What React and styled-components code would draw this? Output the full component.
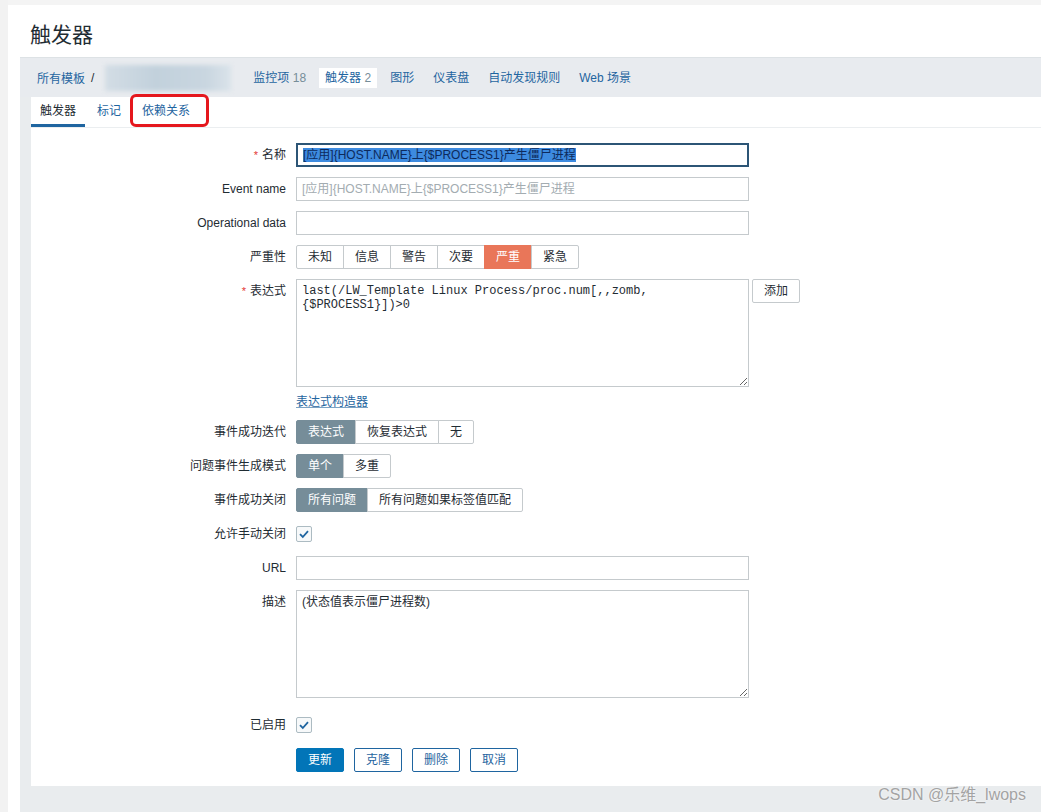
import React from 'react';
import styled, { createGlobalStyle } from 'styled-components';

const FONT = `"Liberation Sans", Arial, "Noto Sans CJK SC", sans-serif`;

const severities = ['未知', '信息', '警告', '次要', '严重', '紧急'];
const navItems = [
  { label: '监控项', count: '18' },
  { label: '触发器', count: '2', active: true },
  { label: '图形' },
  { label: '仪表盘' },
  { label: '自动发现规则' },
  { label: 'Web 场景' },
];

const App = () => {
  return (
    <Page>
      <GlobalStyle />
      <LeftRail />
      <Main>
        <Header>
          <Title>触发器</Title>
        </Header>
        <Content>
          <Breadcrumbs>
            <Crumb>所有模板</Crumb>
            <Slash>/</Slash>
            <Redacted />
            <Nav>
              {navItems.map((item) => (
                <NavItem key={item.label} $active={item.active}>
                  {item.label}
                  {item.count && <Count> {item.count}</Count>}
                </NavItem>
              ))}
            </Nav>
          </Breadcrumbs>

          <Panel>
            <Tabs>
              <Tab $active>触发器</Tab>
              <Tab>标记</Tab>
              <Tab>
                依赖关系
                <Highlight />
              </Tab>
            </Tabs>

            <Form>
              <Label>
                <Req>*</Req>名称
              </Label>
              <FocusedField>
                <Selected>[应用]{'{HOST.NAME}'}上{'{$PROCESS1}'}产生僵尸进程</Selected>
              </FocusedField>

              <Label>Event name</Label>
              <Field $placeholder>[应用]{'{HOST.NAME}'}上{'{$PROCESS1}'}产生僵尸进程</Field>

              <Label>Operational data</Label>
              <Field />

              <Label>严重性</Label>
              <Segments>
                {severities.map((s) => (
                  <Segment key={s} $width={48} $on={s === '严重'} $tone="#e97659">
                    {s}
                  </Segment>
                ))}
              </Segments>

              <Label $top>
                <Req>*</Req>表达式
              </Label>
              <div>
                <ExprRow>
                  <Area
                    $mono
                    readOnly
                    value={'last(/LW_Template Linux Process/proc.num[,,zomb,\n{$PROCESS1}])>0'}
                  />
                  <Button>添加</Button>
                </ExprRow>
                <Link>表达式构造器</Link>
              </div>

              <Label>事件成功迭代</Label>
              <Segments>
                <Segment $on>表达式</Segment>
                <Segment>恢复表达式</Segment>
                <Segment>无</Segment>
              </Segments>

              <Label>问题事件生成模式</Label>
              <Segments>
                <Segment $on>单个</Segment>
                <Segment>多重</Segment>
              </Segments>

              <Label>事件成功关闭</Label>
              <Segments>
                <Segment $on>所有问题</Segment>
                <Segment>所有问题如果标签值匹配</Segment>
              </Segments>

              <Label>允许手动关闭</Label>
              <CheckCell>
                <CheckBox />
              </CheckCell>

              <Label>URL</Label>
              <Field />

              <Label $top>描述</Label>
              <Area readOnly value="(状态值表示僵尸进程数)" />

              <Label $gap>已启用</Label>
              <CheckCell $gap>
                <CheckBox />
              </CheckCell>

              <span />
              <Actions>
                <Button $primary>更新</Button>
                <Button $outline>克隆</Button>
                <Button $outline>删除</Button>
                <Button $outline>取消</Button>
              </Actions>
            </Form>
          </Panel>
        </Content>
      </Main>
      <Watermark>CSDN @乐维_lwops</Watermark>
    </Page>
  );
};

const CheckBox = () => (
  <Box>
    <svg width="12" height="12" viewBox="0 0 12 12">
      <polyline points="2,6.2 4.8,9 10,3.2" fill="none" stroke="#1f65a0" strokeWidth="1.8" />
    </svg>
  </Box>
);

export default App;

// STYLED COMPONENTS
const GlobalStyle = createGlobalStyle`
  html, body {
    margin: 0;
    padding: 0;
    background: #fff;
  }
  body {
    font-family: ${FONT};
    font-size: 12px;
    color: #1f2c33;
  }
  * {
    box-sizing: border-box;
  }
`;

const Page = styled.div`
  position: relative;
  display: flex;
  min-height: 812px;
  overflow: hidden;
`;

const LeftRail = styled.div`
  width: 8px;
  background: #f2f2f2;
`;

const Main = styled.div`
  flex: 1;
  display: flex;
  flex-direction: column;
  border-top: 5px solid #f4f4f4;
  padding-left: 12px;
`;

const Header = styled.div`
  height: 52px;
  display: flex;
  align-items: center;
  padding: 4px 0 0 10px;
`;

const Title = styled.h1`
  margin: 0;
  font-size: 21px;
  font-weight: normal;
  color: #1f2c33;
`;

const Content = styled.div`
  flex: 1;
  display: flex;
  flex-direction: column;
  background: #e9ecee;
  padding-bottom: 27px;
`;

const Breadcrumbs = styled.div`
  height: 40px;
  display: flex;
  align-items: center;
  padding-left: 17px;
  background: #e8ebef;
  border-top: 1px solid #dde2e5;
`;

const Crumb = styled.span`
  color: #1f65a0;
`;

const Slash = styled.span`
  margin-left: 6px;
  color: #1f2c33;
`;

const Redacted = styled.div`
  width: 126px;
  height: 26px;
  margin-left: 11px;
  background: linear-gradient(90deg, #d3dde5, #c2d1dc 40%, #c9d6e0 80%, #dae3ea);
  filter: blur(2px);
`;

const Nav = styled.div`
  display: flex;
  align-items: center;
  gap: 7px;
  margin-left: 16px;
`;

const NavItem = styled.span`
  height: 20px;
  line-height: 20px;
  padding: 0 6px;
  color: #1f65a0;
  background: ${(p) => (p.$active ? '#fff' : 'transparent')};
`;

const Count = styled.span`
  color: #768d99;
`;

const Panel = styled.div`
  margin-left: 11px;
  background: #fff;
  padding-bottom: 14px;
`;

const Tabs = styled.div`
  height: 31px;
  display: flex;
  gap: 3px;
  border-bottom: 1px solid #ebeef0;
`;

const Tab = styled.div`
  position: relative;
  padding: 0 9px;
  line-height: 28px;
  color: ${(p) => (p.$active ? '#1f2c33' : '#1f65a0')};
  border-bottom: 3px solid ${(p) => (p.$active ? '#1f65a0' : 'transparent')};
`;

const Highlight = styled.div`
  position: absolute;
  left: -3px;
  right: -10px;
  top: -3px;
  bottom: -3px;
  border: 3px solid #e5171d;
  border-radius: 6px;
`;

const Form = styled.div`
  display: grid;
  grid-template-columns: 255px 1fr;
  column-gap: 10px;
  row-gap: 10px;
  padding-top: 15px;
`;

const Label = styled.div`
  justify-self: end;
  line-height: 24px;
  white-space: nowrap;
  color: #1f2c33;
  margin-top: ${(p) => (p.$gap ? '5px' : '0')};
`;

const Req = styled.span`
  color: #e33734;
  margin-right: 4px;
  font-size: 11px;
`;

const Field = styled.div`
  width: 453px;
  height: 24px;
  line-height: 22px;
  padding: 0 5px;
  border: 1px solid #c5cacd;
  background: #fff;
  white-space: nowrap;
  overflow: hidden;
  color: ${(p) => (p.$placeholder ? '#a3acb1' : '#1f2c33')};
`;

const FocusedField = styled(Field)`
  border-color: #2c5576;
  box-shadow: 0 0 0 1px #2c5576 inset;
  padding-left: 6px;
`;

const Selected = styled.span`
  background: #3d8be0;
  color: #0d2a5c;
`;

const Segments = styled.div`
  display: flex;
  height: 24px;
`;

const Segment = styled.div`
  width: ${(p) => (p.$width ? `${p.$width}px` : 'auto')};
  padding: ${(p) => (p.$width ? '0' : '0 11px')};
  height: 24px;
  line-height: 22px;
  text-align: center;
  white-space: nowrap;
  border: 1px solid ${(p) => (p.$on ? p.$tone || '#768d99' : '#c5cacd')};
  margin-left: -1px;
  background: ${(p) => (p.$on ? p.$tone || '#768d99' : '#fff')};
  color: ${(p) => (p.$on ? '#fff' : '#1f2c33')};

  &:first-child {
    margin-left: 0;
    border-radius: 2px 0 0 2px;
  }
  &:last-child {
    border-radius: 0 2px 2px 0;
  }
`;

const ExprRow = styled.div`
  display: flex;
  align-items: flex-start;
  gap: 3px;
`;

const Area = styled.textarea`
  display: block;
  width: 453px;
  height: 108px;
  margin: 0;
  padding: 4px 5px;
  border: 1px solid #c5cacd;
  border-radius: 0;
  font-family: ${(p) => (p.$mono ? '"Liberation Mono", "Courier New", monospace' : FONT)};
  font-size: 12px;
  line-height: 14px;
  color: #1f2c33;
  resize: vertical;
  outline: none;
`;

const Link = styled.div`
  margin-top: 8px;
  line-height: 15px;
  color: #1f65a0;
  text-decoration: underline;
  text-decoration-color: #7ba3c4;
`;

const CheckCell = styled.div`
  height: 24px;
  display: flex;
  align-items: center;
  margin-top: ${(p) => (p.$gap ? '5px' : '0')};
`;

const Box = styled.div`
  width: 16px;
  height: 16px;
  border: 1px solid #acbbc2;
  border-radius: 2px;
  background: #f7f9fa;
  display: flex;
  align-items: center;
  justify-content: center;
`;

const Actions = styled.div`
  display: flex;
  gap: 10px;
  padding-top: 1px;
`;

const Button = styled.div`
  width: 48px;
  height: 24px;
  line-height: 22px;
  text-align: center;
  border-radius: 2px;
  border: 1px solid ${(p) => (p.$primary ? '#0275b8' : p.$outline ? '#1f65a0' : '#c5cacd')};
  background: ${(p) => (p.$primary ? '#0275b8' : '#fff')};
  color: ${(p) => (p.$primary ? '#fff' : p.$outline ? '#1f65a0' : '#1f2c33')};
`;

const Watermark = styled.div`
  position: absolute;
  right: 15px;
  bottom: 8px;
  font-family: ${FONT};
  font-size: 16px;
  color: #a3a3a3;
  text-shadow: 0 0 2px #fff;
`;
